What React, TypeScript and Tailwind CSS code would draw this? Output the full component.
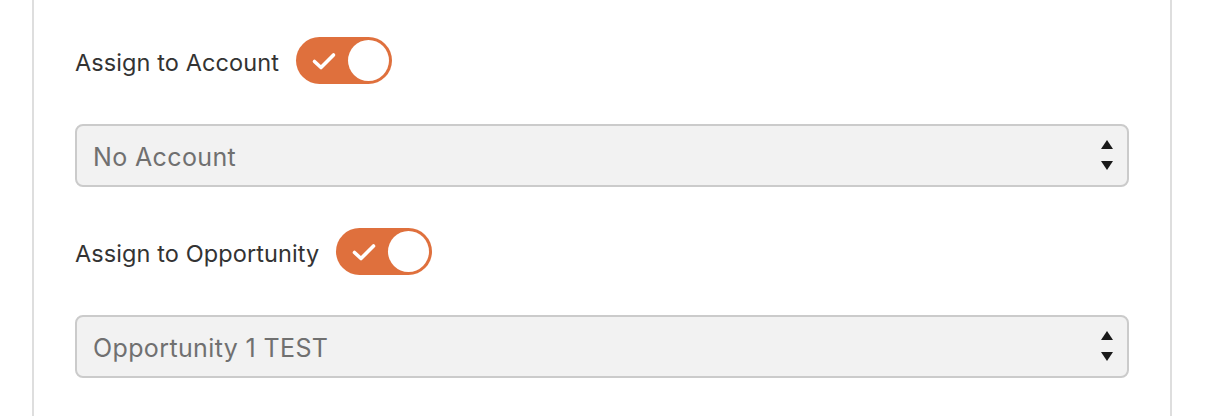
import React from 'react';

function Toggle({ on = true }: { on?: boolean }) {
  return (
    <button
      type="button"
      aria-pressed={on}
      className="relative flex h-[47px] w-[96px] shrink-0 items-center rounded-full bg-[#df703d] p-[3px]"
    >
      <svg
        viewBox="0 0 26 18"
        className="absolute left-[15px] top-[15px] h-[18px] w-[26px]"
        fill="none"
        stroke="white"
        strokeWidth="3.6"
        strokeLinecap="round"
        strokeLinejoin="round"
      >
        <path d="M3.5 9.5 L10 15.5 L22.5 3" />
      </svg>
      <span className="ml-auto h-[41px] w-[41px] rounded-full bg-white" />
    </button>
  );
}

function SelectBox({ value }: { value: string }) {
  return (
    <div className="flex h-[63px] w-full items-center rounded-[8px] border-2 border-[#cbcbcb] bg-[#f2f2f2] pl-[16px] pr-[14px]">
      <span className="flex-1 pt-[4px] text-[25px] tracking-[0.015em] text-[#707070]">{value}</span>
      <svg viewBox="0 0 12 31" className="h-[31px] w-[12px]" fill="#1a1a1a">
        <path d="M6 0 L12 9 L0 9 Z" />
        <path d="M0 21 L12 21 L6 30 Z" />
      </svg>
    </div>
  );
}

function ToggleRow({ label }: { label: string }) {
  return (
    <div className="flex items-center gap-[17px]">
      <span className="pt-[4px] text-[23.5px] tracking-[0.004em] text-[#333333]">{label}</span>
      <Toggle />
    </div>
  );
}

export default function App() {
  return (
    <div
      className="h-[416px] w-[1206px] overflow-hidden bg-white"
      style={{ fontFamily: 'Inter, "Noto Sans", sans-serif' }}
    >
      <div className="ml-[32px] h-full w-[1140px] border-x-2 border-[#dedede] px-[41px] pt-[37px]">
        <div className="flex flex-col">
          <ToggleRow label="Assign to Account" />
          <div className="mt-[40px]">
            <SelectBox value="No Account" />
          </div>
          <div className="mt-[41px]">
            <ToggleRow label="Assign to Opportunity" />
          </div>
          <div className="mt-[40px]">
            <SelectBox value="Opportunity 1 TEST" />
          </div>
        </div>
      </div>
    </div>
  );
}
